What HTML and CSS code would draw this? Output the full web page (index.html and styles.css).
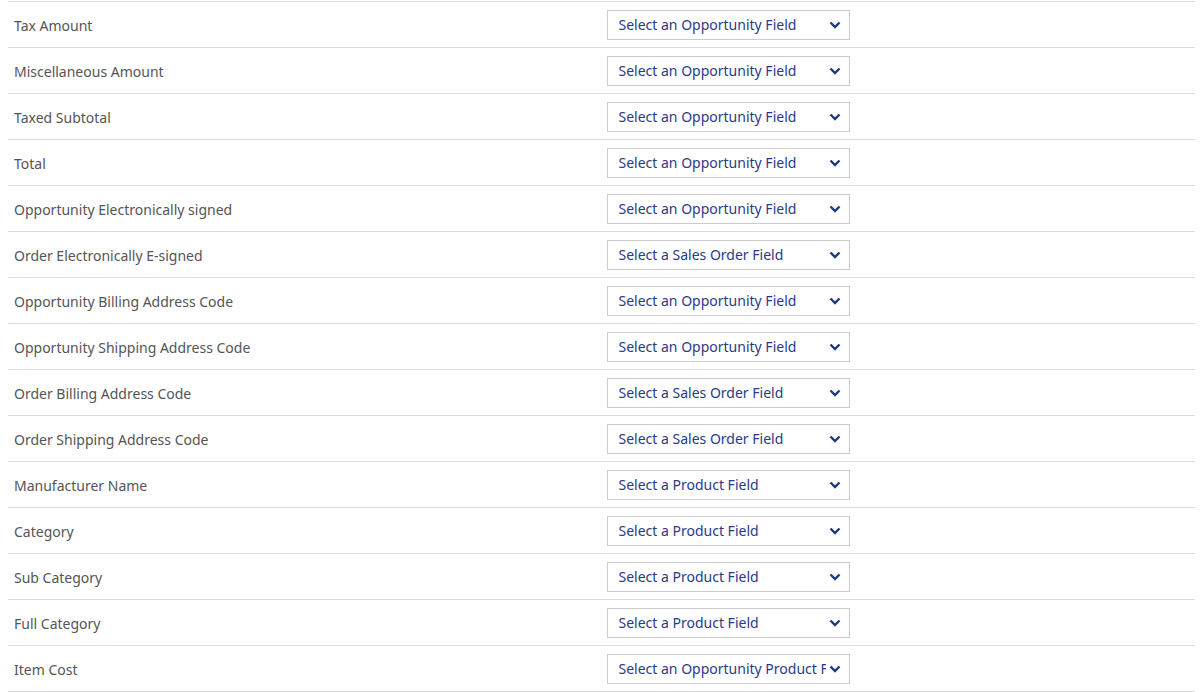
FILE: index.html
```html
<!DOCTYPE html>
<html>
<head>
<meta charset="utf-8">
<link rel="stylesheet" href="styles.css">
</head>
<body>
<div class="table">
  <div class="row"><div class="label">Tax Amount</div><div class="cell"><div class="select"><span class="val">Select an Opportunity Field</span><svg class="chev" viewBox="0 0 12 8"><path d="M1.5 1.5 L6 6 L10.5 1.5" /></svg></div></div></div>
  <div class="row"><div class="label">Miscellaneous Amount</div><div class="cell"><div class="select"><span class="val">Select an Opportunity Field</span><svg class="chev" viewBox="0 0 12 8"><path d="M1.5 1.5 L6 6 L10.5 1.5" /></svg></div></div></div>
  <div class="row"><div class="label">Taxed Subtotal</div><div class="cell"><div class="select"><span class="val">Select an Opportunity Field</span><svg class="chev" viewBox="0 0 12 8"><path d="M1.5 1.5 L6 6 L10.5 1.5" /></svg></div></div></div>
  <div class="row"><div class="label">Total</div><div class="cell"><div class="select"><span class="val">Select an Opportunity Field</span><svg class="chev" viewBox="0 0 12 8"><path d="M1.5 1.5 L6 6 L10.5 1.5" /></svg></div></div></div>
  <div class="row"><div class="label">Opportunity Electronically signed</div><div class="cell"><div class="select"><span class="val">Select an Opportunity Field</span><svg class="chev" viewBox="0 0 12 8"><path d="M1.5 1.5 L6 6 L10.5 1.5" /></svg></div></div></div>
  <div class="row"><div class="label">Order Electronically E-signed</div><div class="cell"><div class="select"><span class="val">Select a Sales Order Field</span><svg class="chev" viewBox="0 0 12 8"><path d="M1.5 1.5 L6 6 L10.5 1.5" /></svg></div></div></div>
  <div class="row"><div class="label">Opportunity Billing Address Code</div><div class="cell"><div class="select"><span class="val">Select an Opportunity Field</span><svg class="chev" viewBox="0 0 12 8"><path d="M1.5 1.5 L6 6 L10.5 1.5" /></svg></div></div></div>
  <div class="row"><div class="label">Opportunity Shipping Address Code</div><div class="cell"><div class="select"><span class="val">Select an Opportunity Field</span><svg class="chev" viewBox="0 0 12 8"><path d="M1.5 1.5 L6 6 L10.5 1.5" /></svg></div></div></div>
  <div class="row"><div class="label">Order Billing Address Code</div><div class="cell"><div class="select"><span class="val">Select a Sales Order Field</span><svg class="chev" viewBox="0 0 12 8"><path d="M1.5 1.5 L6 6 L10.5 1.5" /></svg></div></div></div>
  <div class="row"><div class="label">Order Shipping Address Code</div><div class="cell"><div class="select"><span class="val">Select a Sales Order Field</span><svg class="chev" viewBox="0 0 12 8"><path d="M1.5 1.5 L6 6 L10.5 1.5" /></svg></div></div></div>
  <div class="row"><div class="label">Manufacturer Name</div><div class="cell"><div class="select"><span class="val">Select a Product Field</span><svg class="chev" viewBox="0 0 12 8"><path d="M1.5 1.5 L6 6 L10.5 1.5" /></svg></div></div></div>
  <div class="row"><div class="label">Category</div><div class="cell"><div class="select"><span class="val">Select a Product Field</span><svg class="chev" viewBox="0 0 12 8"><path d="M1.5 1.5 L6 6 L10.5 1.5" /></svg></div></div></div>
  <div class="row"><div class="label">Sub Category</div><div class="cell"><div class="select"><span class="val">Select a Product Field</span><svg class="chev" viewBox="0 0 12 8"><path d="M1.5 1.5 L6 6 L10.5 1.5" /></svg></div></div></div>
  <div class="row"><div class="label">Full Category</div><div class="cell"><div class="select"><span class="val">Select a Product Field</span><svg class="chev" viewBox="0 0 12 8"><path d="M1.5 1.5 L6 6 L10.5 1.5" /></svg></div></div></div>
  <div class="row"><div class="label">Item Cost</div><div class="cell"><div class="select"><span class="val">Select an Opportunity Product Field</span><svg class="chev" viewBox="0 0 12 8"><path d="M1.5 1.5 L6 6 L10.5 1.5" /></svg></div></div></div>
</div>
</body>
</html>
```
FILE: styles.css
```css
html, body {
  margin: 0;
  padding: 0;
  background: #fff;
}
body {
  padding: 1px 9px 0 8px;
  font-family: "Noto Sans", "DejaVu Sans", sans-serif;
  font-size: 14px;
}
.table {
  display: flex;
  flex-direction: column;
  border-bottom: 1px solid #dddddd;
}
.row {
  display: grid;
  grid-template-columns: 1fr 1fr;
  border-top: 1px solid #dddddd;
  height: 45px;
}
.label {
  padding: 1px 6px 0 6px;
  display: flex;
  align-items: center;
  color: #555555;
}
.cell {
  padding: 8px 6px 0 5px;
}
.select {
  width: 243px;
  height: 30px;
  box-sizing: border-box;
  border: 1px solid #cccccc;
  display: flex;
  align-items: center;
  padding: 0 4px 0 11px;
  color: #2a3a8a;
  background: #fff;
}
.val {
  flex: 1;
  white-space: nowrap;
  overflow: hidden;
  padding-bottom: 1px;
}
.chev {
  width: 12px;
  height: 8px;
  margin: 0 4px 0 3px;
  flex: none;
}
.chev path {
  fill: none;
  stroke: #1e3a7b;
  stroke-width: 2.4;
}
```
